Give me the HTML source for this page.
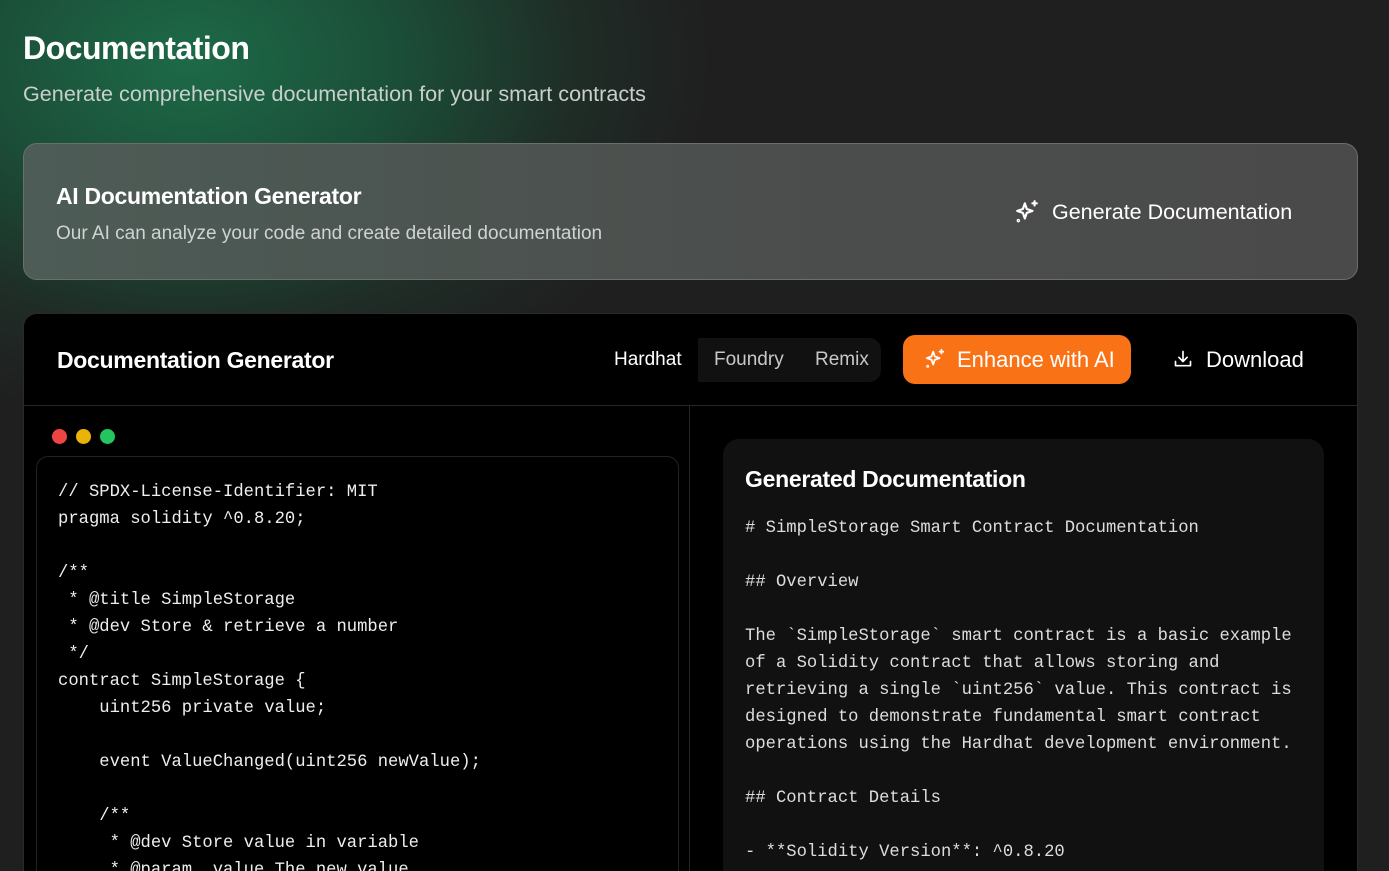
<!DOCTYPE html>
<html style="width:1389px;height:871px;overflow:hidden;background:#1f1f1f"><head><meta charset="utf-8"><style>
*{box-sizing:border-box;margin:0;padding:0}
body{width:1389px;height:871px;overflow:hidden;font-family:"Liberation Sans",sans-serif;color:#fff;
background:radial-gradient(ellipse 520px 360px at 190px 60px,#1d6a47 0%,#1b4e38 40%,#1f2c26 75%,#1f1f1f 100%),#1f1f1f;position:relative}
.abs{position:absolute}
h1{position:absolute;left:23px;top:30px;font-size:32px;font-weight:bold;letter-spacing:-0.5px}
.sub{left:23px;top:81px;font-size:21.6px;color:#c8cfcc}
.card{left:23px;top:143px;width:1335px;height:137px;border:1px solid #6a6f6c;border-radius:14px;
background:linear-gradient(90deg,#4d5c56 0%,#4b4d4c 60%,#4a4a4a 100%)}
.panel{left:23px;top:313px;width:1335px;height:578px;background:#000;border:1px solid #2a2a2a;border-radius:14px;overflow:hidden}
.mono{font-family:"Liberation Mono",monospace;font-size:17.2px;line-height:27px;white-space:pre;color:#eee}
</style></head><body>
<h1>Documentation</h1>
<div class="abs sub">Generate comprehensive documentation for your smart contracts</div>
<div class="abs card">
 <div class="abs" style="left:32px;top:39px;font-size:23px;font-weight:bold;letter-spacing:-0.3px">AI Documentation Generator</div>
 <div class="abs" style="left:32px;top:79px;font-size:19px;color:#cfd3d1">Our AI can analyze your code and create detailed documentation</div>
 <svg class="abs" style="left:990px;top:55px" width="26" height="26" viewBox="0 0 24 24" fill="none" stroke="#fff" stroke-width="2" stroke-linejoin="round" stroke-linecap="round"><path d="M10 4 L11.8 9.2 L17 11 L11.8 12.8 L10 18 L8.2 12.8 L3 11 L8.2 9.2 Z"/><path d="M19 2v4M17 4h4"/><circle cx="4" cy="20" r="0.6"/></svg>
 <div class="abs" style="left:1028px;top:56px;font-size:21.5px">Generate Documentation</div>
</div>
<div class="abs panel">
 <div class="abs" style="left:33px;top:33px;font-size:23px;font-weight:bold;letter-spacing:-0.3px">Documentation Generator</div>
 <div class="abs" style="left:574px;top:24px;width:283px;height:44px;background:#111;border-radius:12px"></div>
 <div class="abs" style="left:574px;top:24px;width:100px;height:44px;background:#000"></div>
 <div class="abs" style="left:590px;top:35px;font-size:19px">Hardhat</div>
 <div class="abs" style="left:690px;top:35px;font-size:19px;color:#c8c8c8">Foundry</div>
 <div class="abs" style="left:791px;top:35px;font-size:19px;color:#c8c8c8">Remix</div>
 <div class="abs" style="left:879px;top:21px;width:228px;height:49px;background:#f97316;border-radius:12px"></div>
 <svg class="abs" style="left:900px;top:34px" width="22" height="22" viewBox="0 0 24 24" fill="none" stroke="#fff" stroke-width="2" stroke-linejoin="round" stroke-linecap="round"><path d="M10 4 L11.8 9.2 L17 11 L11.8 12.8 L10 18 L8.2 12.8 L3 11 L8.2 9.2 Z"/><path d="M19 2v4M17 4h4"/><circle cx="4" cy="20" r="0.6"/></svg>
 <div class="abs" style="left:933px;top:33px;font-size:22px">Enhance with AI</div>
 <svg class="abs" style="left:1149px;top:35px" width="20" height="20" viewBox="0 0 24 24" fill="none" stroke="#fff" stroke-width="2" stroke-linecap="round" stroke-linejoin="round"><path d="M3 15v5h18v-5"/><path d="M12 3v12M7 10l5 5 5-5"/></svg>
 <div class="abs" style="left:1182px;top:33px;font-size:22px">Download</div>
 <div class="abs" style="left:0;top:91px;width:1335px;height:1px;background:#262626"></div>
 <div class="abs" style="left:665px;top:92px;width:1px;height:600px;background:#262626"></div>
 <div class="abs" style="left:28px;top:115px;width:15px;height:15px;border-radius:50%;background:#ef4444"></div>
 <div class="abs" style="left:52px;top:115px;width:15px;height:15px;border-radius:50%;background:#eab308"></div>
 <div class="abs" style="left:76px;top:115px;width:15px;height:15px;border-radius:50%;background:#22c55e"></div>
 <div class="abs" style="left:12px;top:142px;width:643px;height:500px;border:1px solid #222;border-radius:12px;background:#000"></div>
 <div class="abs mono" style="left:34px;top:165px">// SPDX-License-Identifier: MIT
pragma solidity ^0.8.20;

/**
 * @title SimpleStorage
 * @dev Store &amp; retrieve a number
 */
contract SimpleStorage {
    uint256 private value;

    event ValueChanged(uint256 newValue);

    /**
     * @dev Store value in variable
     * @param _value The new value</div>
 <div class="abs" style="left:699px;top:125px;width:601px;height:500px;background:#111;border-radius:16px"></div>
 <div class="abs" style="left:721px;top:152px;font-size:23px;font-weight:bold;letter-spacing:-0.3px">Generated Documentation</div>
 <div class="abs mono" style="left:721px;top:201px;color:#ddd"># SimpleStorage Smart Contract Documentation

## Overview

The `SimpleStorage` smart contract is a basic example
of a Solidity contract that allows storing and
retrieving a single `uint256` value. This contract is
designed to demonstrate fundamental smart contract
operations using the Hardhat development environment.

## Contract Details

- **Solidity Version**: ^0.8.20</div>
</div>
</body></html>
